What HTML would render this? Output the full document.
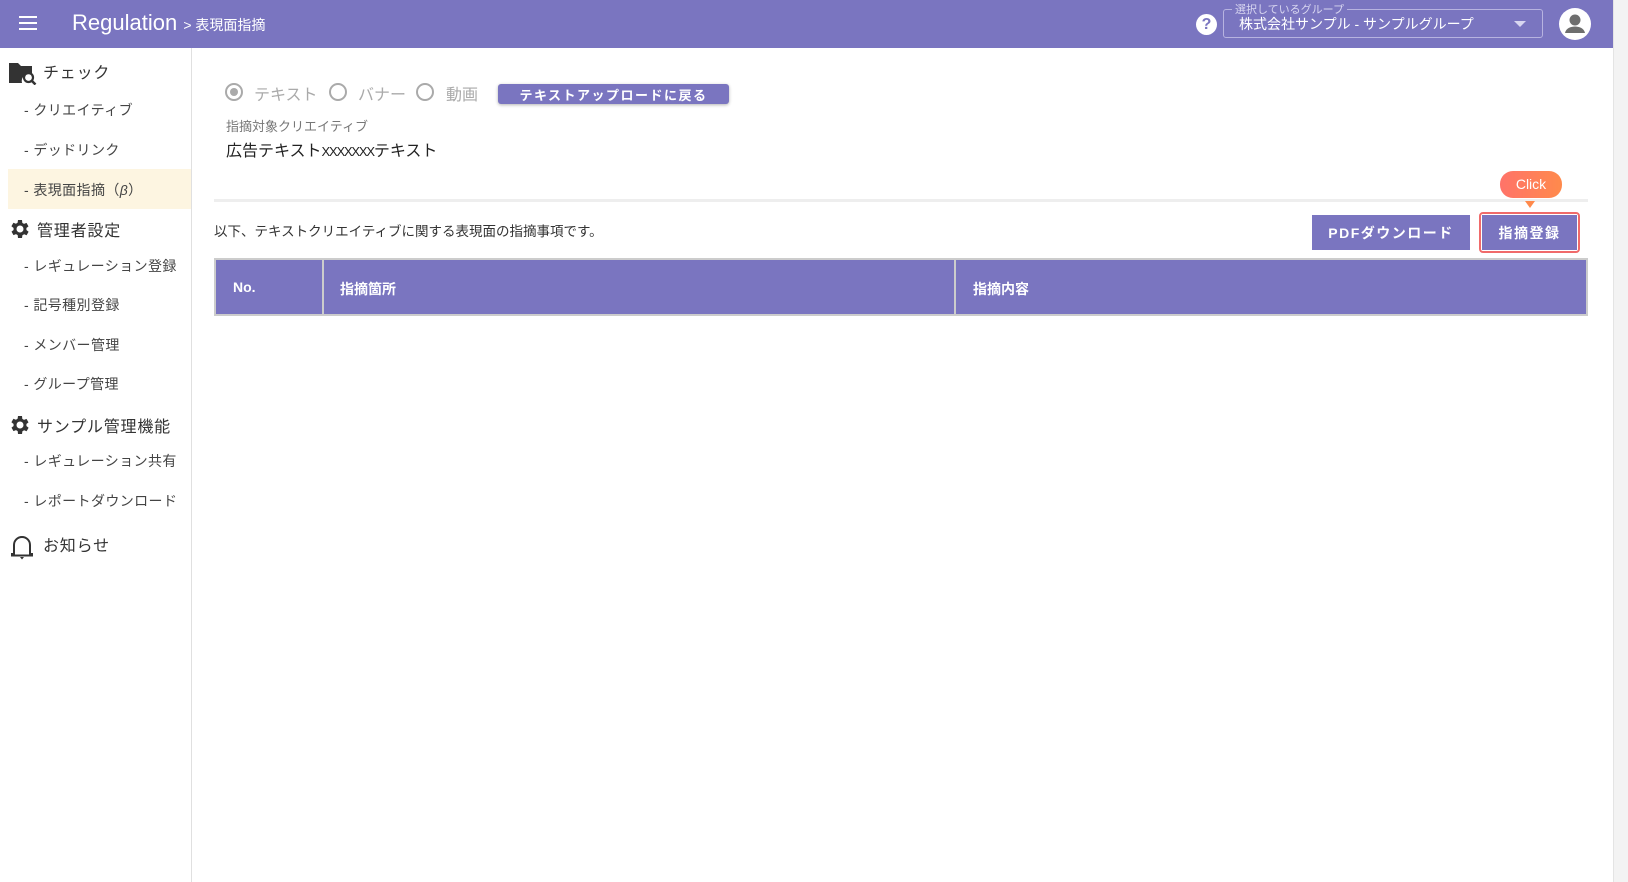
<!DOCTYPE html>
<html><head><meta charset="utf-8"><style>
*{box-sizing:border-box;margin:0;padding:0}
body{width:1628px;height:882px;position:relative;overflow:hidden;background:#fff;font-family:"Liberation Sans","Noto Sans CJK JP",sans-serif;color:#333}
.abs{position:absolute;white-space:nowrap}
#hdr{position:absolute;left:0;top:0;width:1613px;height:48px;background:#7a75c0}
#strip{position:absolute;left:1613px;top:0;width:15px;height:882px;background:#f3f3f3;border-left:1px solid #e4e4e4}
#side{position:absolute;left:0;top:48px;width:192px;height:834px;border-right:1px solid #e0e0e0}
.it{position:absolute;left:24px;font-size:14px;color:#444;letter-spacing:0.4px}
.sec{position:absolute;left:43px;font-size:16px;color:#333;letter-spacing:0.8px}
.btn{position:absolute;background:#7a75c0;color:#fff;font-weight:bold;display:flex;align-items:center;justify-content:center;letter-spacing:1.5px}
.radio{position:absolute;width:18px;height:18px;border:2px solid #aaa;border-radius:50%}
</style></head><body>
<div id="hdr">
 <div class="abs" style="left:19px;top:16px;width:18px;height:2px;background:#fff;box-shadow:0 6px 0 #fff,0 12px 0 #fff"></div>
 <div class="abs" style="left:72px;top:10px;font-size:22px;color:#fff">Regulation <span style="font-size:14px">&gt; 表現面指摘</span></div>
 <div class="abs" style="left:1196px;top:14px;width:21px;height:21px;border-radius:50%;background:#fff;color:#7a75c0;font-weight:bold;font-size:16px;text-align:center;line-height:21px">?</div>
 <div class="abs" style="left:1223px;top:9px;width:320px;height:29px;border:1px solid #b7b3e0;border-radius:3px"></div>
 <div class="abs" style="left:1232px;top:1px;font-size:11px;color:#d8d6f0;background:#7a75c0;padding:0 3px">選択しているグループ</div>
 <div class="abs" style="left:1239px;top:14px;font-size:14px;color:#fff">株式会社サンプル - サンプルグループ</div>
 <div class="abs" style="left:1514px;top:21px;width:0;height:0;border-left:6px solid transparent;border-right:6px solid transparent;border-top:6px solid #d8d6f0"></div>
 <svg class="abs" style="left:1559px;top:8px" width="32" height="32" viewBox="0 0 32 32"><circle cx="16" cy="16" r="16" fill="#fff"/><circle cx="16" cy="12" r="5.5" fill="#6e6e6e"/><path d="M6 25c1-5 6-6.5 10-6.5s9 1.5 10 6.5z" fill="#6e6e6e"/></svg>
</div>
<div id="strip"></div>
<div id="side">
 <svg class="abs" style="left:9px;top:13px" width="28" height="24" viewBox="0 0 28 24"><path d="M0 2h9l3 3h11v9a7 7 0 0 0-10 8H0z" fill="#333"/><circle cx="19.5" cy="16.5" r="4.5" fill="none" stroke="#333" stroke-width="2.2"/><path d="M22.5 19.5l4 4" stroke="#333" stroke-width="2.5"/></svg>
 <div class="sec" style="top:11px">チェック</div>
 <div class="it" style="top:52px">- クリエイティブ</div>
 <div class="it" style="top:92px">- デッドリンク</div>
 <div class="abs" style="left:8px;top:121px;width:183px;height:40px;background:#fdf5e1"></div>
 <div class="it" style="top:132px">- 表現面指摘（<i>β</i>）</div>
 <svg class="abs" style="left:8px;top:169px" width="24" height="24" viewBox="0 0 24 24"><path fill="#333" d="M19.4 13a7.5 7.5 0 0 0 0-2l2.1-1.6-2-3.5-2.5 1a7 7 0 0 0-1.7-1L15 3h-4l-.4 2.7a7 7 0 0 0-1.7 1l-2.5-1-2 3.5L6.6 11a7.5 7.5 0 0 0 0 2l-2.1 1.6 2 3.5 2.5-1a7 7 0 0 0 1.7 1L11 21h4l.4-2.7a7 7 0 0 0 1.7-1l2.5 1 2-3.5zM13 15.5a3.5 3.5 0 1 1 0-7 3.5 3.5 0 0 1 0 7z" transform="translate(-1 0)"/></svg>
 <div class="sec" style="top:169px;left:37px">管理者設定</div>
 <div class="it" style="top:208px">- レギュレーション登録</div>
 <div class="it" style="top:247px">- 記号種別登録</div>
 <div class="it" style="top:287px">- メンバー管理</div>
 <div class="it" style="top:326px">- グループ管理</div>
 <svg class="abs" style="left:8px;top:365px" width="24" height="24" viewBox="0 0 24 24"><path fill="#333" d="M19.4 13a7.5 7.5 0 0 0 0-2l2.1-1.6-2-3.5-2.5 1a7 7 0 0 0-1.7-1L15 3h-4l-.4 2.7a7 7 0 0 0-1.7 1l-2.5-1-2 3.5L6.6 11a7.5 7.5 0 0 0 0 2l-2.1 1.6 2 3.5 2.5-1a7 7 0 0 0 1.7 1L11 21h4l.4-2.7a7 7 0 0 0 1.7-1l2.5 1 2-3.5zM13 15.5a3.5 3.5 0 1 1 0-7 3.5 3.5 0 0 1 0 7z" transform="translate(-1 0)"/></svg>
 <div class="sec" style="top:365px;left:37px">サンプル管理機能</div>
 <div class="it" style="top:403px">- レギュレーション共有</div>
 <div class="it" style="top:443px">- レポートダウンロード</div>
 <svg class="abs" style="left:10px;top:484px" width="24" height="28" viewBox="0 0 24 28"><path d="M4 22V13a8 8 0 0 1 16 0v9h2v1.5H2V22z" fill="none" stroke="#333" stroke-width="2"/><path d="M10 25h4l-2 2.5z" fill="#333"/></svg>
 <div class="sec" style="top:484px">お知らせ</div>
</div>
<!-- main -->
<div class="radio" style="left:225px;top:83px"></div><div class="abs" style="left:230px;top:88px;width:8px;height:8px;border-radius:50%;background:#aaa"></div>
<div class="abs" style="left:254px;top:81px;font-size:16px;color:#aaa">テキスト</div>
<div class="radio" style="left:329px;top:83px"></div>
<div class="abs" style="left:358px;top:81px;font-size:16px;color:#aaa">バナー</div>
<div class="radio" style="left:416px;top:83px"></div>
<div class="abs" style="left:446px;top:81px;font-size:16px;color:#aaa">動画</div>
<div class="btn" style="left:498px;top:84px;width:231px;height:20px;border-radius:3px;font-size:13px;box-shadow:0 1px 3px rgba(0,0,0,.3)">テキストアップロードに戻る</div>
<div class="abs" style="left:226px;top:116px;font-size:13px;color:#777">指摘対象クリエイティブ</div>
<div class="abs" style="left:226px;top:137px;font-size:16px;color:#222">広告テキスト<span style="font-size:13px;letter-spacing:-1.2px">XXXXXXX</span>テキスト</div>
<div class="abs" style="left:214px;top:199px;width:1374px;height:3px;background:#eee"></div>
<div class="abs" style="left:214px;top:220px;font-size:13.5px;color:#333">以下、テキストクリエイティブに関する表現面の指摘事項です。</div>
<div class="btn" style="left:1312px;top:215px;width:158px;height:35px;font-size:14px">PDFダウンロード</div>
<div class="abs" style="left:1479px;top:212px;width:101px;height:41px;border:2px solid #f06a6a;border-radius:4px"></div>
<div class="btn" style="left:1482px;top:215px;width:95px;height:35px;font-size:14px">指摘登録</div>
<div class="abs" style="left:1500px;top:171px;width:62px;height:27px;border-radius:13px;background:linear-gradient(90deg,#ff7369,#ff8a4c);color:#fff;font-size:14px;text-align:center;line-height:27px">Click</div>
<div class="abs" style="left:1525px;top:201px;width:0;height:0;border-left:5px solid transparent;border-right:5px solid transparent;border-top:7px solid #ff8a4c"></div>
<div class="abs" style="left:214px;top:258px;width:1374px;height:58px;background:#7a75c0;border:2px solid #ccc"></div>
<div class="abs" style="left:322px;top:258px;width:2px;height:58px;background:#ccc"></div>
<div class="abs" style="left:954px;top:258px;width:2px;height:58px;background:#ccc"></div>
<div class="abs" style="left:233px;top:279px;font-size:14px;color:#fff;font-weight:bold">No.</div>
<div class="abs" style="left:340px;top:279px;font-size:14px;color:#fff;font-weight:bold">指摘箇所</div>
<div class="abs" style="left:973px;top:279px;font-size:14px;color:#fff;font-weight:bold">指摘内容</div>
</body></html>
